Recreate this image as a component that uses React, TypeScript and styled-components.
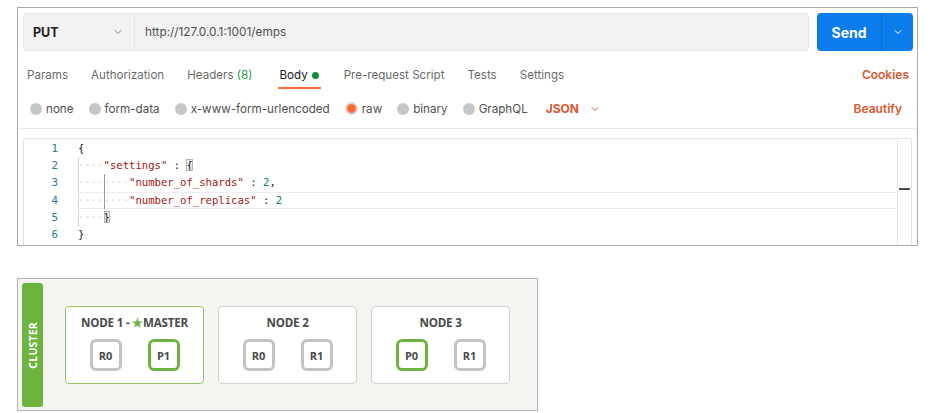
import React from "react";
import styled, { createGlobalStyle } from "styled-components";

const GlobalStyle = createGlobalStyle`
  html, body { margin: 0; padding: 0; background: #ffffff; }
  body { font-family: Inter, "Noto Sans", sans-serif; -webkit-font-smoothing: antialiased; }
  * { box-sizing: border-box; }
`;

const Page = styled.div`
  display: flex;
  flex-direction: column;
  align-items: flex-start;
  gap: 32px;
  padding: 7px 0 0 17px;
`;

const TopPanel = styled.div`
  width: 901px;
  height: 239px;
  border: 1px solid #a9a9a9;
  display: flex;
  flex-direction: column;
  overflow: hidden;
  background: #fff;
`;

const UrlRow = styled.div`
  display: flex;
  gap: 8px;
  height: 38px;
  margin: 5px 4px 0 5px;
  flex-shrink: 0;
`;

const UrlGroup = styled.div`
  flex: 1;
  display: flex;
  background: #f2f2f2;
  border: 1px solid #e6e6e6;
  border-radius: 4px;
`;

const MethodSelect = styled.div`
  width: 111px;
  display: flex;
  align-items: center;
  justify-content: space-between;
  padding: 0 11px 0 9px;
  border-right: 1px solid #e3e3e3;
  font-size: 12.5px;
  font-weight: 700;
  color: #212121;
`;

const UrlText = styled.div`
  display: flex;
  align-items: center;
  padding-left: 10px;
  font-size: 11.8px;
  color: #505050;
`;

const SendButton = styled.div`
  width: 96px;
  display: flex;
  background: #0b7ceb;
  border-radius: 4px;
  color: #fff;
`;

const SendLabel = styled.div`
  width: 64px;
  display: flex;
  align-items: center;
  justify-content: center;
  font-size: 14px;
  font-weight: 700;
`;

const SendArrow = styled.div`
  flex: 1;
  display: flex;
  align-items: center;
  justify-content: center;
  border-left: 1px solid rgba(0, 0, 0, 0.13);
`;

const TabsRow = styled.div`
  display: flex;
  align-items: flex-end;
  height: 38px;
  padding: 0 8px 0 9px;
  flex-shrink: 0;
`;

const Tab = styled.div<{ $active?: boolean }>`
  display: flex;
  align-items: center;
  gap: 4px;
  margin-right: 23px;
  padding: 0 ${(p) => (p.$active ? "2px" : "0")} 4px ${(p) => (p.$active ? "1px" : "0")};
  margin-left: ${(p) => (p.$active ? "3px" : "0")};
  font-size: 11.6px;
  line-height: 16px;
  color: ${(p) => (p.$active ? "#212121" : "#6b6b6b")};
  border-bottom: 2px solid ${(p) => (p.$active ? "#ff6c37" : "transparent")};
`;

const Count = styled.span`
  color: #2e9a4f;
`;

const Dot = styled.span`
  width: 7px;
  height: 7px;
  border-radius: 50%;
  background: #0f8a3c;
  display: inline-block;
`;

const OrangeLink = styled.div`
  margin-left: auto;
  color: #dd5630;
  font-size: 12px;
  font-weight: 600;
  line-height: 16px;
  padding-bottom: 6px;
`;

const BodyTypeRow = styled.div`
  display: flex;
  align-items: center;
  height: 40px;
  padding: 0 15px 0 12px;
  border-bottom: 1px solid #e9e9e9;
  flex-shrink: 0;
`;

const RadioItem = styled.div`
  display: flex;
  align-items: center;
  gap: 4px;
  margin-right: 15px;
  font-size: 11.65px;
  color: #505050;
`;

const Radio = styled.span<{ $checked?: boolean }>`
  width: 12px;
  height: 12px;
  border-radius: 50%;
  background: ${(p) => (p.$checked ? "#ff6c37" : "#c6c6c6")};
  box-shadow: ${(p) => (p.$checked ? "0 0 0 2px #d9d9d9" : "none")};
  ${(p) => (p.$checked ? "width: 9px; height: 9px; margin: 0 2px 0 2px;" : "")}
  display: inline-block;
`;

const LangSelect = styled.div`
  display: flex;
  align-items: center;
  gap: 11px;
  color: #dd5630;
  font-size: 12px;
  font-weight: 700;
  margin-left: 3px;
`;

const BeautifyLink = styled.div`
  margin-left: auto;
  color: #dd5630;
  font-size: 12px;
  font-weight: 600;
`;

const Editor = styled.div`
  flex: 1;
  display: flex;
  margin: 9px 5px 0 5px;
  border: 1px solid #e2e2e2;
  border-bottom: none;
  border-radius: 3px 3px 0 0;
  position: relative;
`;

const Gutter = styled.div`
  width: 34px;
  padding-top: 1px;
  display: flex;
  flex-direction: column;
  align-items: flex-end;
`;

const LineNo = styled.div`
  height: 17.2px;
  line-height: 17.2px;
  font-family: "DejaVu Sans Mono", "Liberation Mono", monospace;
  font-size: 10.8px;
  color: #237893;
`;

const CodeArea = styled.div`
  flex: 1;
  margin-left: 20px;
  padding-top: 1px;
`;

const Line = styled.div<{ $active?: boolean }>`
  height: 17.2px;
  line-height: 17.2px;
  white-space: pre;
  font-family: "DejaVu Sans Mono", "Liberation Mono", monospace;
  font-size: 10.6px;
  color: #222;
  box-shadow: ${(p) => (p.$active ? "inset 0 1px 0 #ececec, inset 0 -1px 0 #ececec" : "none")};
`;

const Indent = styled.span<{ $active?: boolean }>`
  display: inline-block;
  color: #cfcfcf;
  box-shadow: inset 1px 0 0 ${(p) => (p.$active ? "#9a9a9a" : "#d6d6d6")};
`;

const Key = styled.span`
  color: #a31515;
`;

const Num = styled.span`
  color: #098658;
`;

const Bracket = styled.span`
  background: #ececec;
  outline: 1px solid #b4b4b4;
  outline-offset: -1px;
`;

const Ruler = styled.div`
  width: 14px;
  border-left: 1px solid #e6e6e6;
  position: relative;
`;

const RulerMark = styled.div`
  position: absolute;
  left: 1px;
  right: 1px;
  top: 49px;
  height: 2px;
  background: #4a4a4a;
`;

const ClusterPanel = styled.div`
  width: 521px;
  height: 133px;
  border: 1px solid #b3b3b3;
  background: #f5f6f2;
  display: flex;
  align-items: stretch;
  padding: 4px 0 3px 4px;
`;

const ClusterBar = styled.div`
  width: 21px;
  border-radius: 3px;
  background: #6cb33f;
  display: flex;
  align-items: center;
  justify-content: center;
`;

const ClusterLabel = styled.span`
  writing-mode: vertical-rl;
  transform: rotate(180deg);
  color: #fff;
  font-family: "Open Sans", "Noto Sans", sans-serif;
  font-weight: 700;
  font-size: 10.5px;
  letter-spacing: 0.2px;
`;

const Nodes = styled.div`
  display: flex;
  gap: 14px;
  margin-left: 22px;
  align-self: center;
`;

const Node = styled.div<{ $master?: boolean }>`
  width: 139px;
  height: 78px;
  border: 1.5px solid ${(p) => (p.$master ? "#8cc663" : "#d0d0d0")};
  border-radius: 4px;
  background: #fff;
  display: flex;
  flex-direction: column;
  align-items: center;
  padding-top: 8px;
`;

const NodeTitle = styled.div`
  font-family: "Open Sans", "Noto Sans", sans-serif;
  font-weight: 700;
  font-size: 11.6px;
  line-height: 15px;
  color: #4a4a4a;
  letter-spacing: -0.2px;
`;

const Star = styled.span`
  color: #6cb33f;
  font-size: 12px;
`;

const Shards = styled.div`
  display: flex;
  gap: 26px;
  margin-top: 9px;
`;

const Shard = styled.div<{ $primary?: boolean }>`
  width: 32px;
  height: 32px;
  border: 3px solid ${(p) => (p.$primary ? "#6cb33f" : "#c3c3c3")};
  border-radius: 6px;
  background: #fff;
  display: flex;
  align-items: center;
  justify-content: center;
  font-family: "Open Sans", "Noto Sans", sans-serif;
  font-weight: 700;
  font-size: 11px;
  color: #4a4a4a;
`;

const Chevron = ({ color, size = 10 }: { color: string; size?: number }) => (
  <svg width={size} height={size} viewBox="0 0 10 10" fill="none">
    <path d="M2 3.5 L5 6.5 L8 3.5" stroke={color} strokeWidth="1" strokeLinecap="round" strokeLinejoin="round" />
  </svg>
);

const I = ({ active }: { active?: boolean }) => <Indent $active={active}>····</Indent>;

const nodes = [
  { title: "NODE 1", master: true, shards: [{ n: "R0" }, { n: "P1", p: true }] },
  { title: "NODE 2", shards: [{ n: "R0" }, { n: "R1" }] },
  { title: "NODE 3", shards: [{ n: "P0", p: true }, { n: "R1" }] },
];

export default function App() {
  return (
    <>
      <GlobalStyle />
      <Page>
        <TopPanel>
          <UrlRow>
            <UrlGroup>
              <MethodSelect>
                PUT
                <Chevron color="#8a8a8a" />
              </MethodSelect>
              <UrlText>http://127.0.0.1:1001/emps</UrlText>
            </UrlGroup>
            <SendButton>
              <SendLabel>Send</SendLabel>
              <SendArrow>
                <Chevron color="#ffffff" />
              </SendArrow>
            </SendButton>
          </UrlRow>
          <TabsRow>
            <Tab>Params</Tab>
            <Tab>Authorization</Tab>
            <Tab>
              <span>
                Headers <Count>(8)</Count>
              </span>
            </Tab>
            <Tab $active>
              Body <Dot />
            </Tab>
            <Tab>Pre-request Script</Tab>
            <Tab>Tests</Tab>
            <Tab>Settings</Tab>
            <OrangeLink>Cookies</OrangeLink>
          </TabsRow>
          <BodyTypeRow>
            <RadioItem>
              <Radio />
              none
            </RadioItem>
            <RadioItem>
              <Radio />
              form-data
            </RadioItem>
            <RadioItem>
              <Radio />
              x-www-form-urlencoded
            </RadioItem>
            <RadioItem>
              <Radio $checked />
              raw
            </RadioItem>
            <RadioItem>
              <Radio />
              binary
            </RadioItem>
            <RadioItem>
              <Radio />
              GraphQL
            </RadioItem>
            <LangSelect>
              JSON
              <Chevron color="#dd5630" />
            </LangSelect>
            <BeautifyLink>Beautify</BeautifyLink>
          </BodyTypeRow>
          <Editor>
            <Gutter>
              {[1, 2, 3, 4, 5, 6].map((n) => (
                <LineNo key={n}>{n}</LineNo>
              ))}
            </Gutter>
            <CodeArea>
              <Line>{"{"}</Line>
              <Line>
                <I />
                <Key>"settings"</Key>
                {" : "}
                <Bracket>{"{"}</Bracket>
              </Line>
              <Line>
                <I />
                <I active />
                <Key>"number_of_shards"</Key>
                {" : "}
                <Num>2</Num>,
              </Line>
              <Line $active>
                <I />
                <I active />
                <Key>"number_of_replicas"</Key>
                {" : "}
                <Num>2</Num>
              </Line>
              <Line>
                <I />
                <Bracket>{"}"}</Bracket>
              </Line>
              <Line>{"}"}</Line>
            </CodeArea>
            <Ruler>
              <RulerMark />
            </Ruler>
          </Editor>
        </TopPanel>
        <ClusterPanel>
          <ClusterBar>
            <ClusterLabel>CLUSTER</ClusterLabel>
          </ClusterBar>
          <Nodes>
            {nodes.map((node) => (
              <Node key={node.title} $master={node.master}>
                <NodeTitle>
                  {node.title}
                  {node.master && (
                    <>
                      {" - "}
                      <Star>★</Star>MASTER
                    </>
                  )}
                </NodeTitle>
                <Shards>
                  {node.shards.map((s) => (
                    <Shard key={s.n} $primary={s.p}>
                      {s.n}
                    </Shard>
                  ))}
                </Shards>
              </Node>
            ))}
          </Nodes>
        </ClusterPanel>
      </Page>
    </>
  );
}
